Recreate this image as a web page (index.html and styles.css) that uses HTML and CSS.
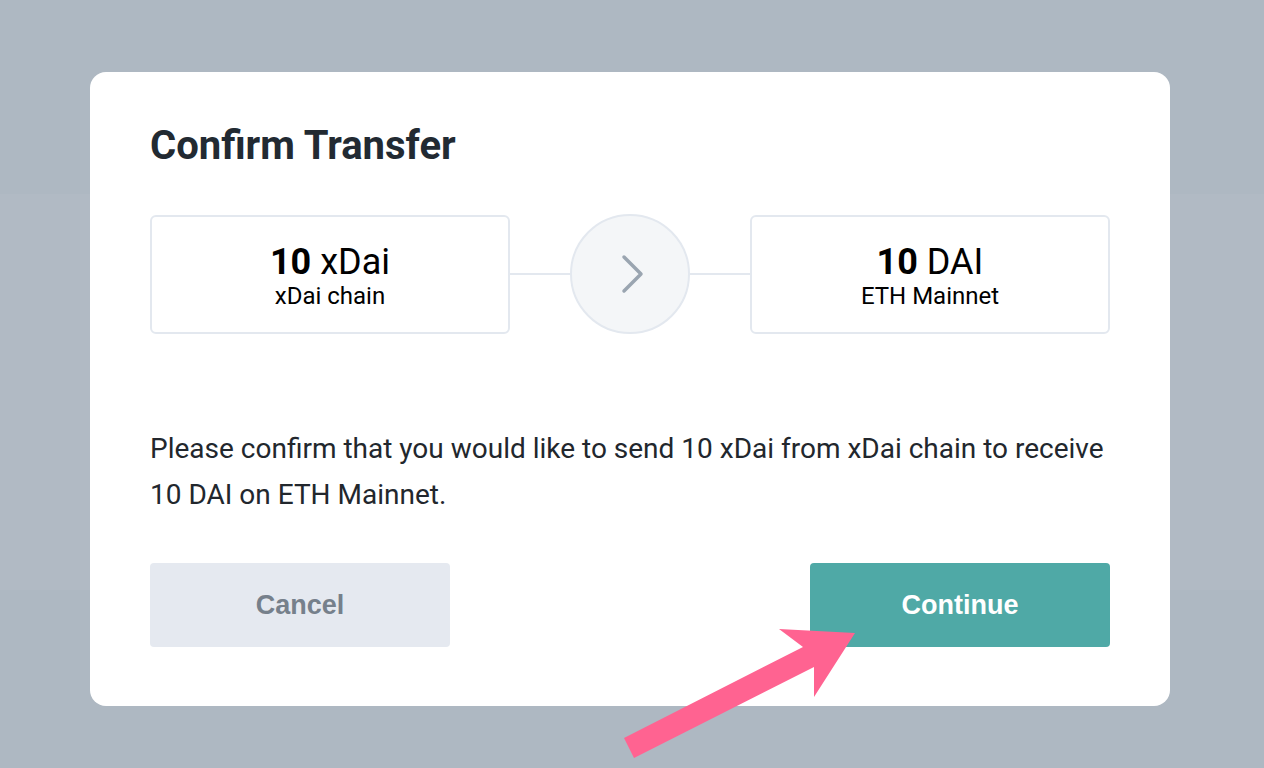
FILE: index.html
```html
<!DOCTYPE html>
<html lang="en">
<head>
<meta charset="utf-8">
<title>Confirm Transfer</title>
<link rel="stylesheet" href="styles.css">
</head>
<body>
<div class="modal">
  <h1 class="title">Confirm Transfer</h1>
  <div class="route">
    <div class="chain-card">
      <div class="amount"><b>10</b> xDai</div>
      <div class="network">xDai chain</div>
    </div>
    <div class="connector"></div>
    <div class="circle">
      <svg width="24" height="40" viewBox="0 0 24 40"><polyline points="4,3 21,20 4,37" fill="none" stroke="#9aa5b1" stroke-width="3.5" stroke-linecap="round" stroke-linejoin="round"/></svg>
    </div>
    <div class="connector"></div>
    <div class="chain-card">
      <div class="amount"><b>10</b> DAI</div>
      <div class="network">ETH Mainnet</div>
    </div>
  </div>
  <p class="message">Please confirm that you would like to send 10 xDai from xDai chain to receive 10 DAI on ETH Mainnet.</p>
  <div class="actions">
    <button class="btn btn-cancel">Cancel</button>
    <button class="btn btn-continue">Continue</button>
  </div>
</div>
<svg class="pointer" width="1264" height="768" viewBox="0 0 1264 768"><polygon points="624,738 803,647 779,629 855,633 814,697 814,667 634,758" fill="#ff6391"/></svg>
</body>
</html>
```
FILE: styles.css
```css
html, body {
  margin: 0;
  height: 768px;
  overflow: hidden;
}
body {
  background: linear-gradient(to bottom, #aeb8c2 0, #aeb8c2 194px, #b1bac4 194px, #b1bac4 590px, #aeb8c2 590px);
  padding-top: 72px;
  box-sizing: border-box;
  font-family: Roboto, "Liberation Sans", sans-serif;
  position: relative;
}
.modal {
  width: 1080px;
  height: 634px;
  margin-left: 90px;
  background: #fff;
  border-radius: 16px;
  padding: 51px 60px 60px;
  box-sizing: border-box;
}
.title {
  margin: 0;
  font-size: 40px;
  line-height: 46px;
  font-weight: 700;
  color: #222a32;
}
.route {
  display: flex;
  align-items: center;
  margin-top: 45px;
}
.chain-card {
  width: 360px;
  height: 119px;
  box-sizing: border-box;
  border: 2px solid #e3e8ef;
  border-radius: 6px;
  padding-top: 5px;
  display: flex;
  flex-direction: column;
  align-items: center;
  justify-content: center;
  color: #000;
}
.amount {
  font-size: 36px;
  line-height: 38px;
}
.amount b {
  font-weight: 700;
}
.network {
  font-size: 24px;
  line-height: 30px;
}
.connector {
  flex: 1;
  height: 2px;
  background: #e3e8ef;
}
.circle {
  width: 120px;
  height: 120px;
  box-sizing: border-box;
  border-radius: 50%;
  background: #f4f6f8;
  border: 2px solid #e3e8ef;
  display: flex;
  align-items: center;
  justify-content: center;
  padding-left: 4px;
}
.message {
  margin: 92px 0 0;
  font-size: 28px;
  line-height: 46px;
  color: #22272d;
}
.actions {
  display: flex;
  justify-content: space-between;
  margin-top: 45px;
}
.btn {
  width: 300px;
  height: 84px;
  border: none;
  border-radius: 4px;
  font-family: "Liberation Sans", Arial, sans-serif;
  font-weight: 700;
  font-size: 27px;
}
.btn-cancel {
  background: #e5e9f0;
  color: #76808b;
}
.btn-continue {
  background: #4fa9a6;
  color: #fff;
}
.pointer {
  position: absolute;
  left: 0;
  top: 0;
}
```
